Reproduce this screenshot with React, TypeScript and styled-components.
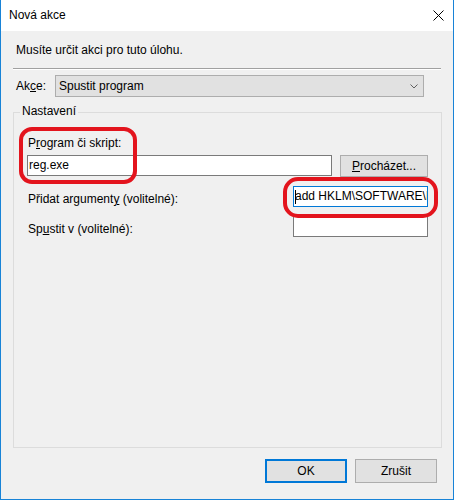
import styled, { createGlobalStyle } from 'styled-components';

const GlobalStyle = createGlobalStyle`
  html, body {
    margin: 0;
    padding: 0;
    background: #ffffff;
  }
  body {
    font-family: "Liberation Sans", Arial, sans-serif;
    font-size: 12px;
    color: #000;
  }
  * {
    box-sizing: border-box;
  }
`;

const Window = styled.div`
  width: 454px;
  height: 500px;
  display: flex;
  flex-direction: column;
  background: #f0f0f0;
  border: 1px solid #1883d7;
  border-top: none;
`;

const TitleBar = styled.div`
  flex-shrink: 0;
  height: 31px;
  background: #ffffff;
  display: flex;
  align-items: center;
  justify-content: space-between;
  padding: 0 9px 0 8px;
  line-height: 15px;
`;

const Body = styled.div`
  flex: 1;
  display: flex;
  flex-direction: column;
  padding: 0 11px 16px 12px;
  line-height: 15px;
`;

const Instruction = styled.div`
  margin: 12px 0 0 3px;
`;

const Separator = styled.div`
  margin: 10px 1px 0 0;
  height: 2px;
  border-top: 1px solid #a0a0a0;
  border-bottom: 1px solid #ffffff;
`;

const ActionRow = styled.div`
  margin-top: 5px;
  display: flex;
  align-items: center;
  padding-left: 3px;
`;

const ActionLabel = styled.span`
  width: 39px;
`;

const Select = styled.div`
  width: 369px;
  height: 22px;
  display: flex;
  align-items: center;
  justify-content: space-between;
  background: #e1e1e1;
  border: 1px solid #adadad;
  padding: 0 5px 0 3px;
`;

const Group = styled.div`
  position: relative;
  flex: 1;
  margin-top: 15px;
  border: 1px solid #dcdcdc;
  padding: 23px 13px 0 13px;
`;

const Legend = styled.span`
  position: absolute;
  top: -9px;
  left: 6px;
  padding: 0 2px;
  background: #f0f0f0;
`;

const FieldLabel = styled.div<{ $top?: number }>`
  margin: ${(p) => p.$top ?? 0}px 0 4px 1px;
`;

const Row = styled.div<{ $gap?: number }>`
  display: flex;
  align-items: flex-start;
  justify-content: space-between;
  margin-top: ${(p) => p.$gap ?? 0}px;
`;

const TextBox = styled.div<{ $width: number; $focused?: boolean }>`
  width: ${(p) => p.$width}px;
  height: 21px;
  background: #ffffff;
  border: 1px solid ${(p) => (p.$focused ? '#0078d7' : '#7a7a7a')};
  padding-left: 1px;
  line-height: 19px;
  white-space: nowrap;
  overflow: hidden;
  display: flex;
  align-items: center;
`;

const Caret = styled.span`
  display: inline-block;
  width: 1px;
  height: 14px;
  background: #000;
  margin-right: -1px;
  flex-shrink: 0;
`;

const Button = styled.div<{ $width: number; $default?: boolean }>`
  width: ${(p) => p.$width}px;
  height: ${(p) => (p.$default ? 24 : 22)}px;
  display: flex;
  align-items: center;
  justify-content: center;
  background: #e1e1e1;
  border: ${(p) => (p.$default ? '2px solid #0078d7' : '1px solid #adadad')};
`;

const DialogButton = styled(Button)`
  height: 24px;
`;

const ButtonRow = styled.div`
  margin-top: 11px;
  display: flex;
  justify-content: flex-end;
  gap: 8px;
  padding-right: 5px;
`;

const Mark = styled.div<{ $top: number; $left: number; $w: number; $h: number; $r: number }>`
  position: absolute;
  top: ${(p) => p.$top}px;
  left: ${(p) => p.$left}px;
  width: ${(p) => p.$w}px;
  height: ${(p) => p.$h}px;
  border: 4px solid #e3141d;
  border-radius: ${(p) => p.$r}px;
  pointer-events: none;
`;

export default function App() {
  return (
    <>
      <GlobalStyle />
      <Window>
        <TitleBar>
          <span>Nová akce</span>
          <svg width="11" height="11" viewBox="0 0 11 11">
            <path d="M0.5 0.5L10.5 10.5M10.5 0.5L0.5 10.5" stroke="#000" strokeWidth="1" fill="none" />
          </svg>
        </TitleBar>
        <Body>
          <Instruction>Musíte určit akci pro tuto úlohu.</Instruction>
          <Separator />
          <ActionRow>
            <ActionLabel>
              Ak<u>c</u>e:
            </ActionLabel>
            <Select>
              <span>Spustit program</span>
              <svg width="8" height="5" viewBox="0 0 8 5">
                <path d="M0.5 0.5L4 4L7.5 0.5" stroke="#606060" fill="none" />
              </svg>
            </Select>
          </ActionRow>
          <Group>
            <Legend>Nastavení</Legend>
            <FieldLabel>
              P<u>r</u>ogram či skript:
            </FieldLabel>
            <Row>
              <TextBox $width={305}>reg.exe</TextBox>
              <Button $width={88}>
                <span>
                  <u>P</u>rocházet...
                </span>
              </Button>
            </Row>
            <Row $gap={9}>
              <FieldLabel $top={6}>
                Přidat argument<u>y</u> (volitelné):
              </FieldLabel>
              <TextBox $width={135} $focused>
                <Caret />
                add HKLM\SOFTWARE\Microsoft\Windows
              </TextBox>
            </Row>
            <Row $gap={5}>
              <FieldLabel $top={6}>
                Sp<u>u</u>stit v (volitelné):
              </FieldLabel>
              <TextBox $width={135} />
            </Row>
            <Mark $top={14} $left={5} $w={118} $h={57} $r={13} />
            <Mark $top={64} $left={269} $w={155} $h={41} $r={15} />
          </Group>
          <ButtonRow>
            <DialogButton $width={82} $default>
              OK
            </DialogButton>
            <DialogButton $width={82}>Zrušit</DialogButton>
          </ButtonRow>
        </Body>
      </Window>
    </>
  );
}
